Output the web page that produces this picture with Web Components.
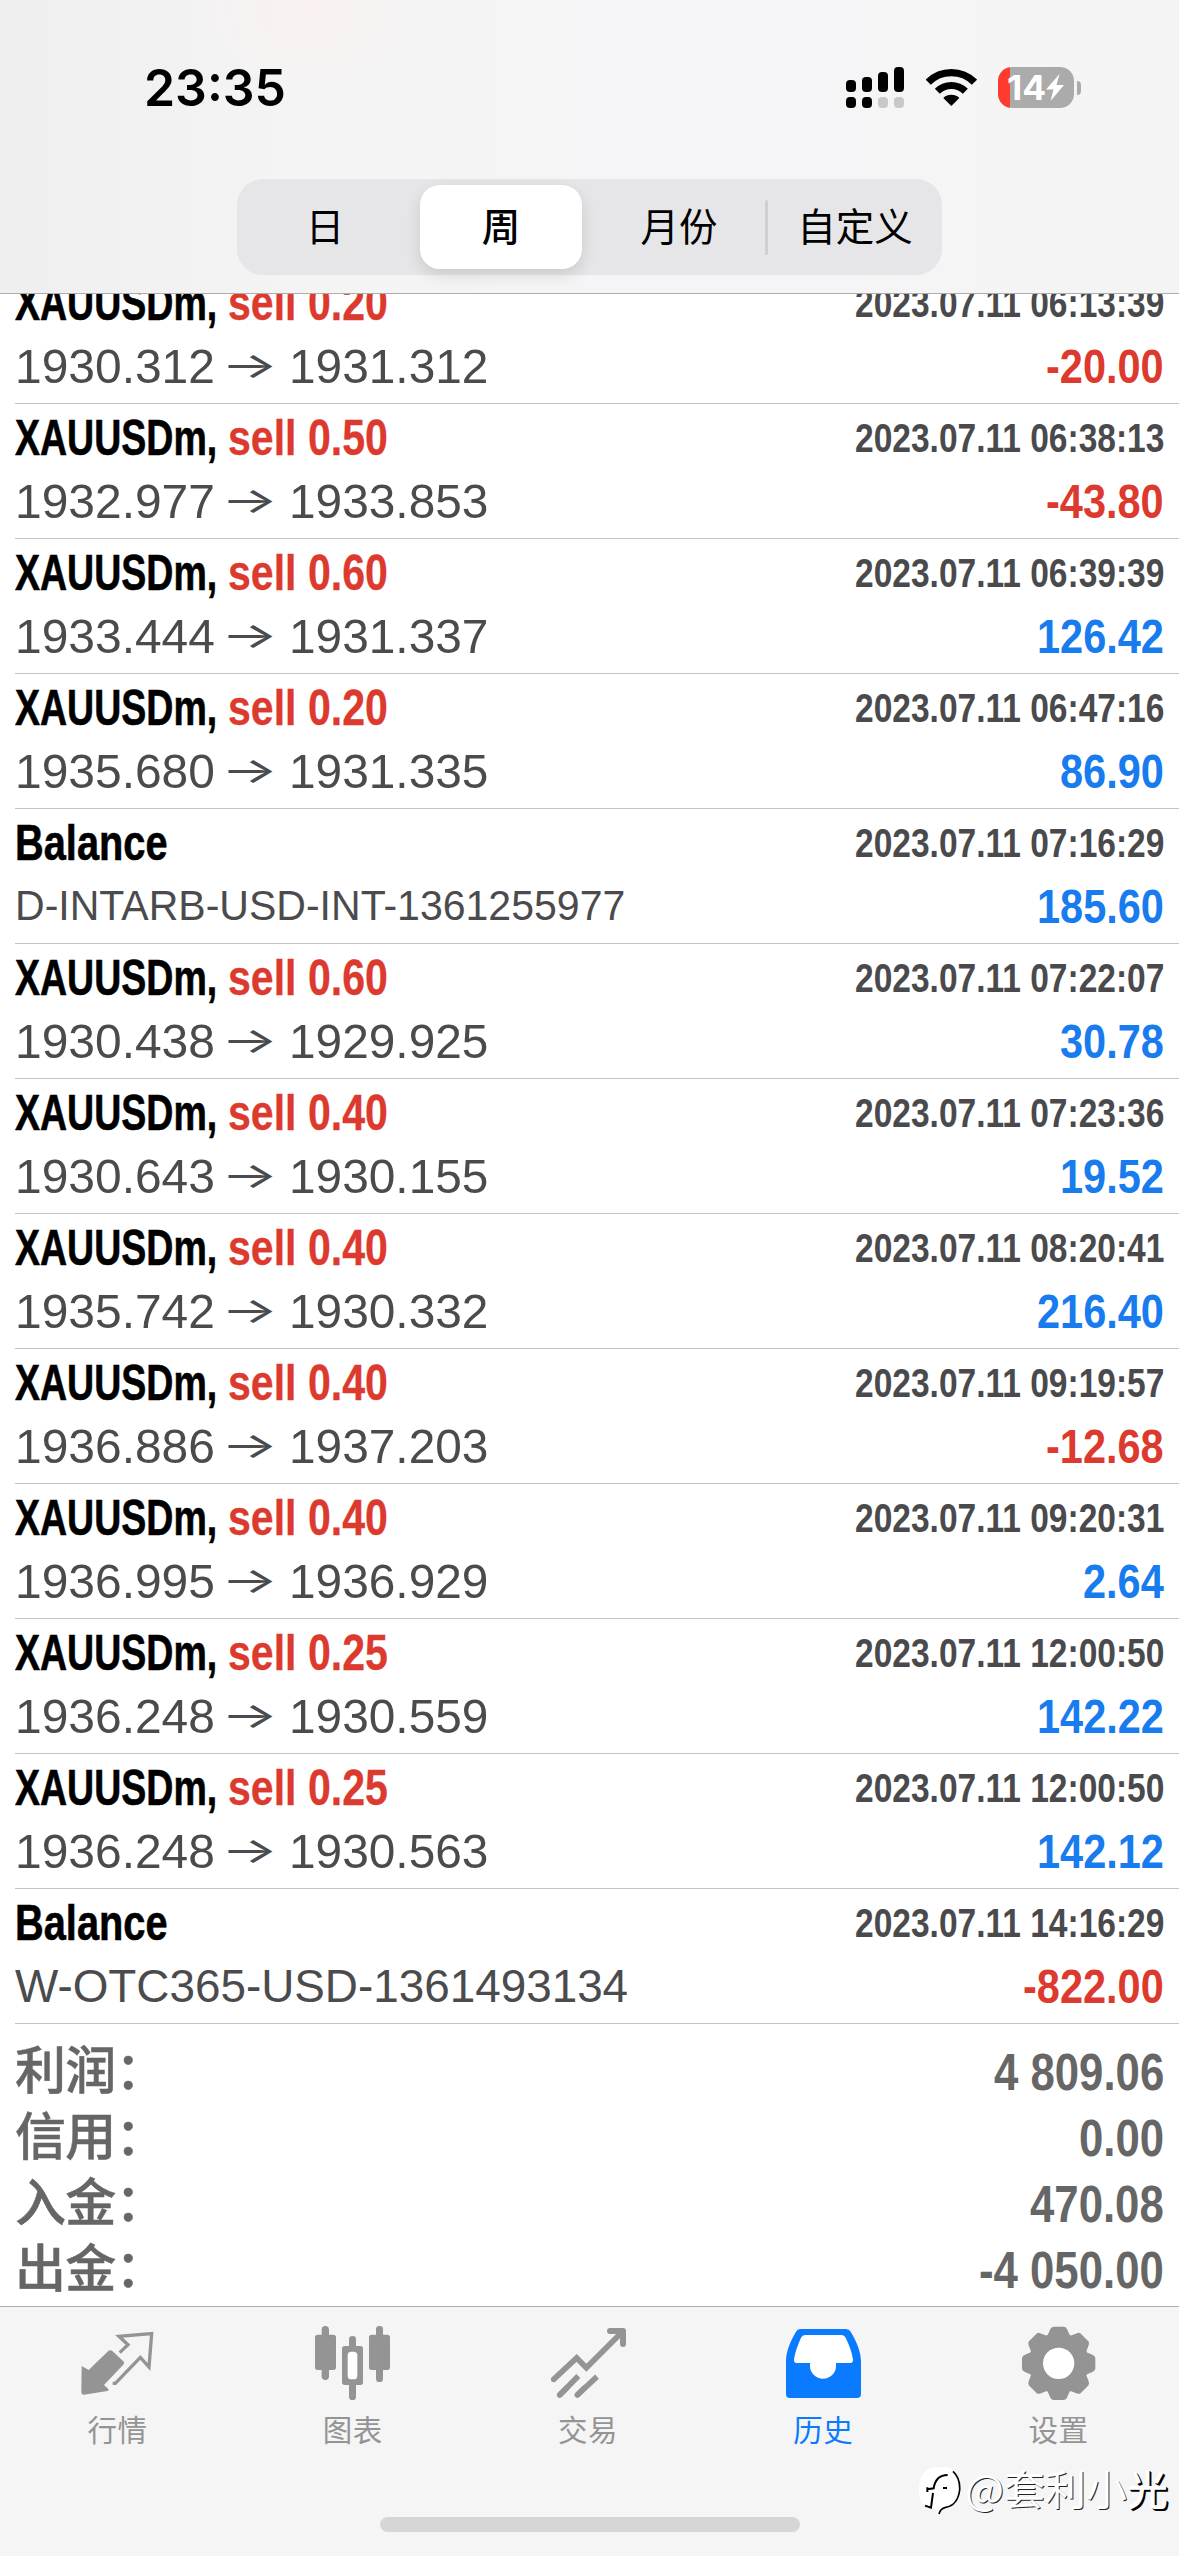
<!DOCTYPE html>
<html lang="zh-CN">
<head>
<meta charset="utf-8">
<title>History</title>
<style>
html,body{margin:0;padding:0;background:#fff}
body{width:1179px;height:2556px;overflow:hidden;font-family:"Liberation Sans","Noto Sans CJK SC",sans-serif}
</style>
</head>
<body>
<trade-app></trade-app>
<script>
const ctx = document.createElement('canvas').getContext('2d');

/* Text squeezed horizontally: "w" is the drawn width of the "ref" string. */
class FitText extends HTMLElement {
  connectedCallback() {
    const text = this.getAttribute('text');
    const root = this.attachShadow({mode: 'open'});
    root.innerHTML = `<style>:host{display:block;white-space:pre;flex:none}
      span{display:inline-block;transform-origin:0 50%;white-space:pre;font-kerning:normal}</style><span></span>`;
    const span = root.querySelector('span');
    span.textContent = text;
    const cs = getComputedStyle(this);
    ctx.font = `${cs.fontWeight} ${cs.fontSize} ${cs.fontFamily}`;
    const m = ctx.measureText(this.getAttribute('ref') || text);
    const k = parseFloat(this.getAttribute('w')) / (m.actualBoundingBoxRight + m.actualBoundingBoxLeft);
    span.style.transform = `scaleX(${k})`;
    this.style.width = ctx.measureText(text).width * k + 'px';
  }
}
customElements.define('fit-text', FitText);

class StatusBar extends HTMLElement {
  constructor() {
    super();
    this.attachShadow({mode: 'open'}).innerHTML = `
    <style>
      :host{display:flex;justify-content:space-between;align-items:flex-start;height:179px;box-sizing:border-box;padding:58px 98px 0 144px}
      .time{font:600 51px/60px Inter,sans-serif;color:#000}
      .right{display:flex;align-items:center;padding-top:9px}
      svg{display:block}
      .bat{position:relative;display:flex;align-items:center;margin-left:21px;gap:3px}
      .cell{width:76px;height:41px;border-radius:14px;background:linear-gradient(90deg,#ff3b30 12px,#ababab 12px);display:flex;align-items:center;box-sizing:border-box;padding-left:9px;color:#fff;font:700 34px/41px Inter,sans-serif}
      .nub{width:4px;height:14px;border-radius:0 4px 4px 0;background:#ababab}
    </style>
    <fit-text class="time" text="23:35" w="137"></fit-text>
    <div class="right">
      <svg width="58" height="41" viewBox="0 0 58 41"><g fill="#000"><rect y="13" width="10" height="12" rx="4"/><rect x="16" y="10" width="10" height="15" rx="4"/><rect x="32" y="5" width="10" height="20" rx="4"/><rect x="48" width="10" height="25" rx="4"/><rect y="30" width="10" height="11" rx="4"/><rect x="16" y="30" width="10" height="11" rx="4"/></g><g fill="#c8c8c9"><rect x="32" y="30" width="10" height="11" rx="4"/><rect x="48" y="30" width="10" height="11" rx="4"/></g></svg>
      <svg style="margin-left:22px" width="51" height="41" viewBox="289 51 153 123"><g fill="none" stroke="#000"><path d="M295.7 96.7A98 98 0 0 1 434.3 96.7" stroke-width="22"/><path d="M323 124A59.5 59.5 0 0 1 407 124" stroke-width="21"/></g><path d="M365 168L341 144A34 34 0 0 1 389 144Z"/></svg>
      <div class="bat"><div class="cell"><fit-text text="14" w="37"></fit-text>
        <svg width="18" height="27" viewBox="0 0 18 27"><path d="M13.5 0L0 15.5H7.5L4.500 27L18 11H10.500Z" fill="#fff"/></svg></div><div class="nub"></div></div>
    </div>`;
  }
}
customElements.define('status-bar', StatusBar);

class SegmentControl extends HTMLElement {
  constructor() {
    super();
    this.attachShadow({mode: 'open'}).innerHTML = `
    <style>
      :host{display:flex;width:705px;height:96px;margin:0 auto;border-radius:26px;background:#e6e5e7;font:400 38.5px/78px "Noto Sans CJK SC",sans-serif;color:#000;box-sizing:border-box;padding:6px 0}
      div{flex:1;text-align:center;height:84px;position:relative}
      .on{flex:none;width:162px;margin:0 7px;background:#fff;border-radius:20px;box-shadow:0 6px 16px rgba(0,0,0,.12);font-weight:500}
      .day{flex:none;width:176px}
      .month{flex:none;width:176px;text-indent:4px}
      .sep{flex:none;width:3px;height:55px;margin:15px 0 0;background:#cfcfd1;border-radius:2px}
    </style>
    <div class="day">日</div><div class="on">周</div><div class="month">月份</div><div class="sep"></div><div>自定义</div>`;
  }
}
customElements.define('segment-control', SegmentControl);

class DealRow extends HTMLElement {
  connectedCallback() {
    const [kind, a, b, date, amt] = this.getAttribute('data').split('|');
    const bal = kind === 'Balance';
    const first = bal
      ? `<fit-text class="t" text="Balance" w="149.5"></fit-text>`
      : `<fit-text class="t" text="XAUUSDm," w="200"></fit-text><fit-text class="t s" text="${kind}" ref="sell 0.50" w="157.5"></fit-text>`;
    const second = bal
      ? `<fit-text style="font-size:${a}px" text="${b}" w="${a === '42' ? 606 : 612}"></fit-text>`
      : `<fit-text text="${a}" ref="1932.977" w="195"></fit-text><fit-text class="arr" text="→" w="45"></fit-text><fit-text text="${b}" ref="1933.853" w="194.500"></fit-text>`;
    this.attachShadow({mode: 'open'}).innerHTML = `
    <style>
      :host{display:flex;justify-content:space-between;height:135px;box-sizing:border-box;border-top:1px solid #c4c4c6;margin-left:15px;padding:4px 15px 0 0;line-height:60px}
      .l,.r{display:flex;flex-direction:column;gap:3px}
      .r{align-items:flex-end}
      .line{display:flex;height:60px}
      .t{font-size:50px;font-weight:700;color:#000;-webkit-text-stroke:.6px currentColor}
      .s{color:#dc3a2e;margin-left:11px;-webkit-text-stroke:.3px currentColor}
      .p{font-size:48.500px;color:#4b4b4d}
      .arr{font-family:Inter,sans-serif;font-weight:400;font-size:36px;margin:-1px 11px 0 6px}
      .d{font-size:40px;font-weight:700;color:#4a4a4d}
      .a{font-size:49px;font-weight:700;color:${amt[0] === '-' ? '#dc3a2e' : '#187bee'}}
    </style>
    <div class="l"><div class="line">${first}</div><div class="line p">${second}</div></div>
    <div class="r"><fit-text class="d" text="${date}" ref="2023.07.11 06:38:13" w="307.5"></fit-text><fit-text class="a" text="${amt}" ref="822.00" w="125"></fit-text></div>`;
  }
}
customElements.define('deal-row', DealRow);

class DealSummary extends HTMLElement {
  constructor() {
    super();
    const rows = [['利润:', '4 809.06'], ['信用:', '0.00'], ['入金:', '470.08'], ['出金:', '-4 050.00']];
    this.attachShadow({mode: 'open'}).innerHTML = `
    <style>
      :host{display:block;border-top:1px solid #c4c4c6;margin-left:15px;padding:15px 15px 0 0;color:#666;line-height:66px}
      div{display:flex;justify-content:space-between;height:66px}
      .k{font:500 51px/66px "Liberation Sans","Noto Sans CJK SC",sans-serif;letter-spacing:-.8px;-webkit-text-stroke:.5px currentColor}
      .v{font-size:52px;font-weight:700}
    </style>` + rows.map(([k, v]) => `<div><span class="k">${k.replace(':', '\uFF1A')}</span><fit-text class="v" text="${v}" ref="470.08" w="133"></fit-text></div>`).join('');
  }
}
customElements.define('deal-summary', DealSummary);

const tooth = [0,45,90,135,180,225,270,315].map(r => `<path transform="rotate(${r} 899 220)" d="M883 113H915Q920 114 922 120L929 136Q933 143 945 144L899 220L853 144Q865 143 869 136L876 120Q878 114 883 113Z" stroke="currentColor" stroke-width="6" stroke-linejoin="round"/>`).join('');
const ICONS = {
  quotes: ['240 108 225 225', `<path d="M245 228L266 240L324 184Q331 177 338 184L370 214Q375 219 369 225L312 285L326 298Q327 302 322 303L252 314Q244 315 244 307Z"/><path d="M359 188L384 164L357 139L455 131L447 231L421 202L346 280H338" fill="none" stroke="currentColor" stroke-width="10"/>`],
  chart: ['945 108 225 225', `<rect x="945" y="134" width="63" height="106" rx="8"/><rect x="965" y="108" width="22" height="162" rx="11"/><rect x="1107" y="134" width="63" height="106" rx="8"/><rect x="1128" y="108" width="21" height="168" rx="10"/><rect x="1047" y="138" width="21" height="192" rx="10"/><rect x="1026" y="168" width="63" height="117" rx="8"/><rect x="1043" y="185" width="29" height="83" rx="11" fill="#fff"/>`],
  trade: ['453 108 225 225', `<g fill="none" stroke="currentColor" stroke-width="17" stroke-linecap="round"><path d="M461 268L530 204L559 233L664 128"/><path d="M630 123H669V162" stroke-width="18" stroke-linejoin="round"/><path d="M479 315L500 294M532 315L553 294"/></g><path d="M479 315L535 258M532 315L591 260" stroke="currentColor" stroke-width="17"/>`],
  history: ['78 108 225 225', `<path d="M120 117H258Q268 117 272 125C290 155 303 185 303 215V312Q303 324 291 324H90Q78 324 78 312V215C78 185 90 155 108 125Q112 117 120 117Z"/><path fill="#fff" d="M135 135H245Q253 135 257 143C268 165 275 185 279 208Q280 219 271 219H228V228A39 38 0 0 1 150 228V219H110Q101 219 102 208C106 185 113 165 123 143Q127 135 135 135Z"/>`],
  settings: ['786 108 225 225', `<circle cx="899" cy="220" r="86"/><g>${tooth}</g><circle cx="899" cy="220" r="47" fill="#fff"/>`]
};

class TabItem extends HTMLElement {
  connectedCallback() {
    const [vb, body] = ICONS[this.getAttribute('icon')];
    this.attachShadow({mode: 'open'}).innerHTML = `
    <style>
      :host{flex:1;display:flex;flex-direction:column;align-items:center;color:#949494;padding-top:19px}
      :host([active]){color:#0a7aff}
      svg{display:block;fill:currentColor}
      span{font:400 29.500px/44px "Noto Sans CJK SC",sans-serif;margin-top:5px;letter-spacing:.5px}
    </style><svg width="75" height="75" viewBox="${vb}">${body}</svg><span><slot></slot></span>`;
  }
}
customElements.define('tab-item', TabItem);

class WaterMark extends HTMLElement {
  constructor() {
    super();
    this.attachShadow({mode: 'open'}).innerHTML = `
    <style>
      :host{position:absolute;right:11px;top:2457px;display:flex;align-items:center;font:400 41px/56px "Noto Sans CJK SC",sans-serif;color:#fff;text-shadow:1px 1px 0 #222}
      svg{display:block;margin:9px 4px 0 0}
      b{font-weight:500;text-shadow:1px 1px 0 #000,2px 2px 0 #000}
    </style>
    <svg width="44" height="50" viewBox="466 536 132 150"><path d="M520 540H560Q594 550 594 600Q594 650 550 662Q538 668 532 680L520 664Q472 664 472 610Q472 545 520 540Z" fill="#fff"/><g fill="none" stroke="#000"><path d="M574 552Q596 572 594 608Q588 654 552 660Q536 664 532 680" stroke-width="5"/><path d="M497 606L516 603Q522 563 558 563M497 614V600M514 617L508 661L490 655" stroke-width="6"/></g><rect x="544" y="599" width="12" height="6"/></svg><span>@套利小<b>光</b></span>`;
  }
}
customElements.define('water-mark', WaterMark);

const deals = [
  'sell 0.20|1930.312|1931.312|2023.07.11 06:13:39|-20.00',
  'sell 0.50|1932.977|1933.853|2023.07.11 06:38:13|-43.80',
  'sell 0.60|1933.444|1931.337|2023.07.11 06:39:39|126.42',
  'sell 0.20|1935.680|1931.335|2023.07.11 06:47:16|86.90',
  'Balance|42|D-INTARB-USD-INT-1361255977|2023.07.11 07:16:29|185.60',
  'sell 0.60|1930.438|1929.925|2023.07.11 07:22:07|30.78',
  'sell 0.40|1930.643|1930.155|2023.07.11 07:23:36|19.52',
  'sell 0.40|1935.742|1930.332|2023.07.11 08:20:41|216.40',
  'sell 0.40|1936.886|1937.203|2023.07.11 09:19:57|-12.68',
  'sell 0.40|1936.995|1936.929|2023.07.11 09:20:31|2.64',
  'sell 0.25|1936.248|1930.559|2023.07.11 12:00:50|142.22',
  'sell 0.25|1936.248|1930.563|2023.07.11 12:00:50|142.12',
  'Balance|47|W-OTC365-USD-1361493134|2023.07.11 14:16:29|-822.00'
];

class TradeApp extends HTMLElement {
  constructor() {
    super();
    this.attachShadow({mode: 'open'}).innerHTML = `
    <style>
      :host{display:flex;flex-direction:column;position:relative;width:1179px;height:2556px;background:#fff;overflow:hidden}
      header{flex:none;height:294px;box-sizing:border-box;border-bottom:1px solid #adadae;background:radial-gradient(ellipse 110px 80px at 310px 10px,#f9f2f1,transparent),linear-gradient(90deg,#efeff0,#f3f2f3 180px,#f5f4f4 300px,#f5f5f7 640px,#f5f4f5)}
      main{flex:none;height:2012px;overflow:hidden}
      .list{margin-top:-26px}
      nav{flex:none;height:250px;box-sizing:border-box;border-top:1px solid #adadae;background:#f5f5f5;display:flex;flex-direction:column;justify-content:space-between;align-items:center}
      .tabs{display:flex;width:100%;box-sizing:border-box;padding-right:3px}
      .home{width:420px;height:15px;border-radius:8px;background:#d6d6d6;margin-bottom:24px}
    </style>
    <header><status-bar></status-bar><segment-control></segment-control></header>
    <main><div class="list">${deals.map(d => `<deal-row data="${d}"></deal-row>`).join('')}<deal-summary></deal-summary></div></main>
    <nav><div class="tabs"><tab-item icon="quotes">行情</tab-item><tab-item icon="chart">图表</tab-item><tab-item icon="trade">交易</tab-item><tab-item icon="history" active>历史</tab-item><tab-item icon="settings">设置</tab-item></div><div class="home"></div></nav>
    <water-mark></water-mark>`;
  }
}
customElements.define('trade-app', TradeApp);
</script>
</body>
</html>
